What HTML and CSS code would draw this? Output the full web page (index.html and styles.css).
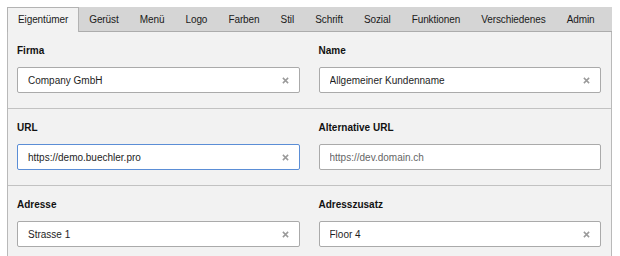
FILE: index.html
```html
<!DOCTYPE html>
<html lang="de">
<head>
<meta charset="utf-8">
<title>Eigentümer</title>
<link rel="stylesheet" href="styles.css">
</head>
<body>
<div class="app">
  <nav class="tabs">
    <a class="tab active">Eigentümer</a>
    <a class="tab">Gerüst</a>
    <a class="tab">Menü</a>
    <a class="tab">Logo</a>
    <a class="tab">Farben</a>
    <a class="tab">Stil</a>
    <a class="tab">Schrift</a>
    <a class="tab">Sozial</a>
    <a class="tab">Funktionen</a>
    <a class="tab">Verschiedenes</a>
    <a class="tab">Admin</a>
  </nav>
  <div class="panel">
    <div class="row">
      <div class="field">
        <label class="label">Firma</label>
        <div class="box">
          <input class="input" type="text" value="Company GmbH">
          <svg class="clear" viewBox="0 0 8 8" width="7" height="7"><path d="M1 1L7 7M7 1L1 7"/></svg>
        </div>
      </div>
      <div class="field">
        <label class="label">Name</label>
        <div class="box">
          <input class="input" type="text" value="Allgemeiner Kundenname">
          <svg class="clear" viewBox="0 0 8 8" width="7" height="7"><path d="M1 1L7 7M7 1L1 7"/></svg>
        </div>
      </div>
    </div>
    <div class="row">
      <div class="field">
        <label class="label">URL</label>
        <div class="box focused">
          <input class="input" type="text" value="https://demo.buechler.pro">
          <svg class="clear" viewBox="0 0 8 8" width="7" height="7"><path d="M1 1L7 7M7 1L1 7"/></svg>
        </div>
      </div>
      <div class="field">
        <label class="label">Alternative URL</label>
        <div class="box">
          <input class="input" type="text" placeholder="https://dev.domain.ch">
        </div>
      </div>
    </div>
    <div class="row">
      <div class="field">
        <label class="label">Adresse</label>
        <div class="box">
          <input class="input" type="text" value="Strasse 1">
          <svg class="clear" viewBox="0 0 8 8" width="7" height="7"><path d="M1 1L7 7M7 1L1 7"/></svg>
        </div>
      </div>
      <div class="field">
        <label class="label">Adresszusatz</label>
        <div class="box">
          <input class="input" type="text" value="Floor 4">
          <svg class="clear" viewBox="0 0 8 8" width="7" height="7"><path d="M1 1L7 7M7 1L1 7"/></svg>
        </div>
      </div>
    </div>
  </div>
</div>
</body>
</html>
```
FILE: styles.css
```css
* { box-sizing: border-box; }
html, body { margin: 0; padding: 0; background: #ffffff; }
body {
  font-family: "Liberation Sans", Arial, sans-serif;
  font-size: 10px;
  color: #1e1e1e;
}
.app {
  margin: 7px 8px 0 7px;
}
.tabs {
  display: flex;
  background: #d5d5d5;
  border-bottom: 1px solid #acacac;
  height: 25px;
}
.tab {
  display: block;
  height: 25px;
  line-height: 23px;
  padding: 0 9.5px 0 9.6px;
  border: 1px solid transparent;
  border-bottom: none;
  color: #1a1a1a;
  letter-spacing: -0.1px;
  white-space: nowrap;
  cursor: pointer;
}
.tab.active {
  background: #f2f2f2;
  border-color: #b3b3b3;
  padding-left: 10px;
  height: 25px;
  margin-bottom: -1px;
}
.panel {
  background: #f2f2f2;
  border-left: 1px solid #b9b9b9;
  border-right: 1px solid #b9b9b9;
}
.row {
  display: grid;
  grid-template-columns: 1fr 1fr;
  column-gap: 19px;
  padding: 12px 10px 15px 9px;
  border-bottom: 1px solid #c2c2c2;
}
.field {
  display: flex;
  flex-direction: column;
}
.label {
  font-weight: bold;
  line-height: 14px;
  margin-bottom: 9px;
  color: #111;
}
.box {
  display: flex;
  align-items: center;
  height: 26px;
  padding: 0 10px;
  background: #ffffff;
  border: 1px solid #aaaaaa;
  border-radius: 2px;
}
.box.focused {
  border-color: #5b8ed6;
}
.input {
  flex: 1;
  min-width: 0;
  border: none;
  outline: none;
  background: transparent;
  padding: 0;
  font-family: "Liberation Sans", Arial, sans-serif;
  font-size: 10px;
  color: #1e1e1e;
}
.input::placeholder {
  color: #666666;
  opacity: 1;
}
.clear {
  flex: none;
  stroke: #9a9a9a;
  stroke-width: 1.7;
  fill: none;
}
```
